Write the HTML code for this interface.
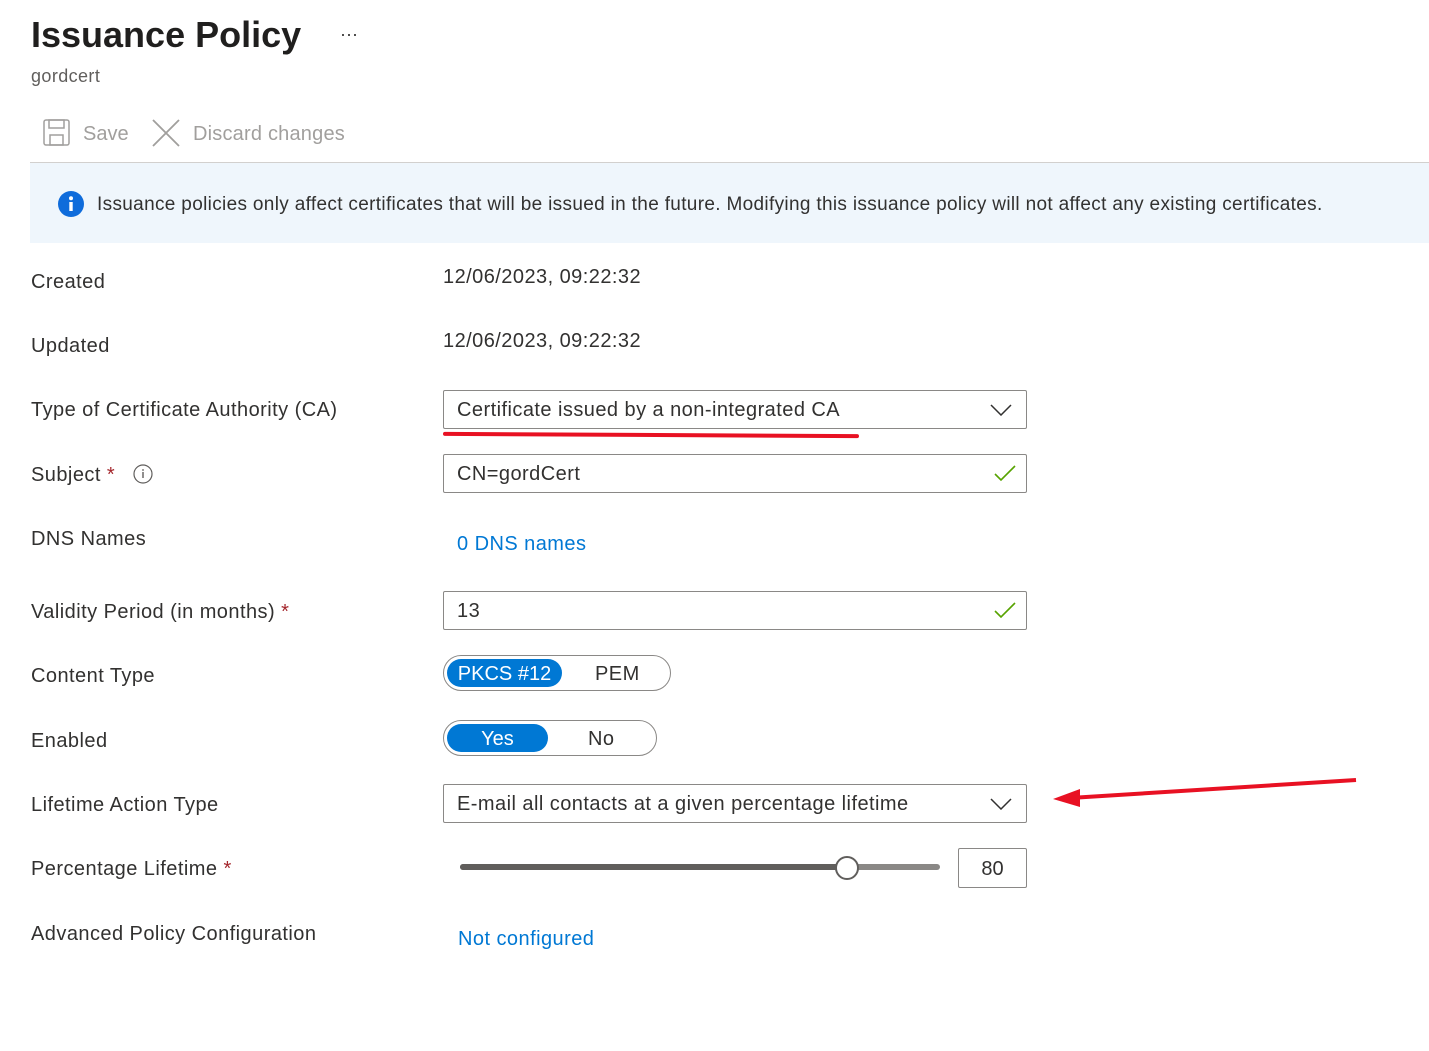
<!DOCTYPE html>
<html><head><style>
body{margin:0;width:1429px;height:1051px;background:#fff;font-family:"Liberation Sans",sans-serif;color:#323130;position:relative;overflow:hidden}
.a{position:absolute;white-space:nowrap}
.t{font-size:20px;letter-spacing:0.45px}
.lbl{position:absolute;left:31px;font-size:20px;letter-spacing:0.45px;color:#323130;white-space:nowrap}
.box{position:absolute;left:443px;width:582px;height:37px;border:1px solid #8a8886;border-radius:2px;font-size:20px;letter-spacing:0.45px;line-height:39px;box-sizing:content-box}
.box span{position:absolute;left:13px}
.star{color:#a4262c}
.link{color:#0078d4;font-size:20px;letter-spacing:0.45px}
</style></head><body>
<div class="a" style="left:31px;top:14px;font-size:36px;font-weight:600;color:#201f1e">Issuance Policy</div>
<div class="a" style="left:340px;top:24px;font-size:18px">···</div>
<div class="a" style="left:31px;top:66px;font-size:18px;letter-spacing:0.4px;color:#605e5c">gordcert</div>
<svg class="a" style="left:43px;top:119px" width="27" height="27" viewBox="0 0 27 27" fill="none" stroke="#a19f9d" stroke-width="1.5"><rect x="1" y="1" width="25" height="25" rx="2"/><rect x="6" y="1" width="15" height="8"/><rect x="7" y="16" width="13" height="10"/></svg>
<div class="a" style="left:83px;top:123px;font-size:20px;color:#a19f9d">Save</div>
<svg class="a" style="left:152px;top:119px" width="28" height="28" stroke="#a19f9d" stroke-width="1.8"><path d="M1 1L27 27M27 1L1 27"/></svg>
<div class="a" style="left:193px;top:123px;font-size:20px;letter-spacing:0.2px;color:#a19f9d">Discard changes</div>
<div class="a" style="left:30px;top:162px;width:1399px;height:1px;background:#d2d0ce"></div>
<div class="a" style="left:30px;top:163px;width:1399px;height:80px;background:#eff6fc"></div>
<svg class="a" style="left:58px;top:191px" width="26" height="26"><circle cx="13" cy="13" r="13" fill="#0f6cdb"/><rect x="11.3" y="11" width="3.4" height="9" fill="#fff"/><circle cx="13" cy="7.3" r="2" fill="#fff"/></svg>
<div class="a" style="left:97px;top:194px;font-size:19px;letter-spacing:0.33px">Issuance policies only affect certificates that will be issued in the future. Modifying this issuance policy will not affect any existing certificates.</div>
<div class="lbl" style="top:271px">Created</div>
<div class="a t" style="left:443px;top:266px">12/06/2023, 09:22:32</div>
<div class="lbl" style="top:335px">Updated</div>
<div class="a t" style="left:443px;top:330px">12/06/2023, 09:22:32</div>
<div class="lbl" style="top:399px">Type of Certificate Authority (CA)</div>
<div class="box" style="top:390px"><span>Certificate issued by a non-integrated CA</span><svg style="position:absolute;right:14px;top:13px" width="22" height="12" fill="none" stroke="#323130" stroke-width="1.5"><path d="M1 1L11 11L21 1"/></svg></div>
<div class="a" style="left:443px;top:433px;width:416px;height:4px;background:#e81123;border-radius:2px;transform:rotate(0.3deg)"></div>
<div class="lbl" style="top:464px">Subject <span class="star">*</span></div>
<svg class="a" style="left:133px;top:464px" width="20" height="20"><circle cx="10" cy="10" r="9" fill="none" stroke="#605e5c" stroke-width="1.2"/><rect x="9.3" y="8" width="1.4" height="6" fill="#605e5c"/><circle cx="10" cy="6" r=".9" fill="#605e5c"/></svg>
<div class="box" style="top:454px"><span>CN=gordCert</span><svg style="position:absolute;right:10px;top:10px" width="22" height="18" fill="none" stroke="#57a300" stroke-width="1.6"><path d="M1 9L7 15L21 1"/></svg></div>
<div class="lbl" style="top:528px">DNS Names</div>
<div class="a link" style="left:457px;top:533px">0 DNS names</div>
<div class="lbl" style="top:601px">Validity Period (in months) <span class="star">*</span></div>
<div class="box" style="top:591px"><span>13</span><svg style="position:absolute;right:10px;top:10px" width="22" height="18" fill="none" stroke="#57a300" stroke-width="1.6"><path d="M1 9L7 15L21 1"/></svg></div>
<div class="lbl" style="top:665px">Content Type</div>
<div class="a" style="left:443px;top:655px;width:226px;height:34px;border:1px solid #8a8886;border-radius:18px"></div>
<div class="a" style="left:447px;top:659px;width:115px;height:28px;background:#0078d4;border-radius:14px;color:#fff;font-size:20px;text-align:center;line-height:30px">PKCS #12</div>
<div class="a t" style="left:595px;top:663px">PEM</div>
<div class="lbl" style="top:730px">Enabled</div>
<div class="a" style="left:443px;top:720px;width:212px;height:34px;border:1px solid #8a8886;border-radius:18px"></div>
<div class="a" style="left:447px;top:724px;width:101px;height:28px;background:#0078d4;border-radius:14px;color:#fff;font-size:20px;text-align:center;line-height:30px">Yes</div>
<div class="a t" style="left:588px;top:728px">No</div>
<div class="lbl" style="top:794px">Lifetime Action Type</div>
<div class="box" style="top:784px"><span>E-mail all contacts at a given percentage lifetime</span><svg style="position:absolute;right:14px;top:13px" width="22" height="12" fill="none" stroke="#323130" stroke-width="1.5"><path d="M1 1L11 11L21 1"/></svg></div>
<svg class="a" style="left:1050px;top:772px" width="310" height="36"><path d="M20 26L306 8" stroke="#e81123" stroke-width="4"/><path d="M3 27L30 17L30 35Z" fill="#e81123"/></svg>
<div class="lbl" style="top:858px">Percentage Lifetime <span class="star">*</span></div>
<div class="a" style="left:460px;top:864px;width:480px;height:6px;background:#8a8886;border-radius:3px"></div>
<div class="a" style="left:460px;top:864px;width:388px;height:6px;background:#605e5c;border-radius:3px"></div>
<div class="a" style="left:835px;top:856px;width:20px;height:20px;border:2px solid #605e5c;border-radius:50%;background:#fff"></div>
<div class="a" style="left:958px;top:848px;width:67px;height:38px;border:1px solid #8a8886;border-radius:2px;font-size:20px;text-align:center;line-height:40px">80</div>
<div class="lbl" style="top:923px">Advanced Policy Configuration</div>
<div class="a link" style="left:458px;top:928px">Not configured</div>
</body></html>
